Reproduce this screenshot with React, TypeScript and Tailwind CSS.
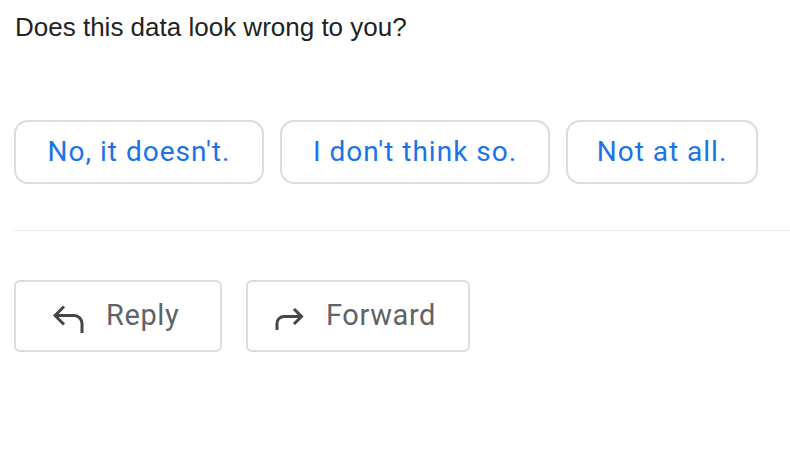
export default function App() {
  const suggestions = [
    { label: "No, it doesn't.", w: 'w-[250px]' },
    { label: "I don't think so.", w: 'w-[270px]' },
    { label: 'Not at all.', w: 'w-[192px]' },
  ];

  return (
    <main className="w-[790px] h-[464px] bg-white pl-[14px] pt-[12px] font-['Roboto',sans-serif]">
      <h1 className="text-[26px] leading-[30px] text-[#222222] font-['Liberation_Sans',Arial,sans-serif] pl-px">
        Does this data look wrong to you?
      </h1>

      {/* Smart replies */}
      <div className="flex gap-4 mt-[78px]">
        {suggestions.map((s) => (
          <button
            key={s.label}
            className={`${s.w} h-[64px] rounded-[14px] border-2 border-[#dadce0] bg-white text-[#1a73e8] text-[28px] font-normal tracking-[1px] flex items-center justify-center`}
          >
            {s.label}
          </button>
        ))}
      </div>

      <div className="mt-[46px] h-px bg-[#ececec]" />

      {/* Reply / Forward */}
      <div className="flex gap-6 mt-[49px]">
        <button className="w-[208px] h-[72px] rounded-[6px] border-2 border-[#dadce0] bg-white text-[#5f6368] text-[29px] font-normal tracking-[0.6px] flex items-center pl-[37px] gap-[22px]">
          <svg width="31" height="28" viewBox="0 0 31 28" fill="none" stroke="#444746" strokeWidth="3" className="mt-[6px]">
            <polyline points="11,1.5 2,10.5 11,19.5" />
            <path d="M2 10.5 H21 a8 8 0 0 1 8 8 V28" />
          </svg>
          Reply
        </button>
        <button className="w-[224px] h-[72px] rounded-[6px] border-2 border-[#dadce0] bg-white text-[#5f6368] text-[29px] font-normal tracking-[0.6px] flex items-center pl-[26px] gap-[22px]">
          <svg width="30" height="24" viewBox="0 0 30 24" fill="none" stroke="#444746" strokeWidth="3" className="mt-[4px]">
            <polyline points="20,3 27.5,10.5 20,18" />
            <path d="M27.5 10.5 H10 a7 7 0 0 0 -7 7 V24" />
          </svg>
          Forward
        </button>
      </div>
    </main>
  );
}
